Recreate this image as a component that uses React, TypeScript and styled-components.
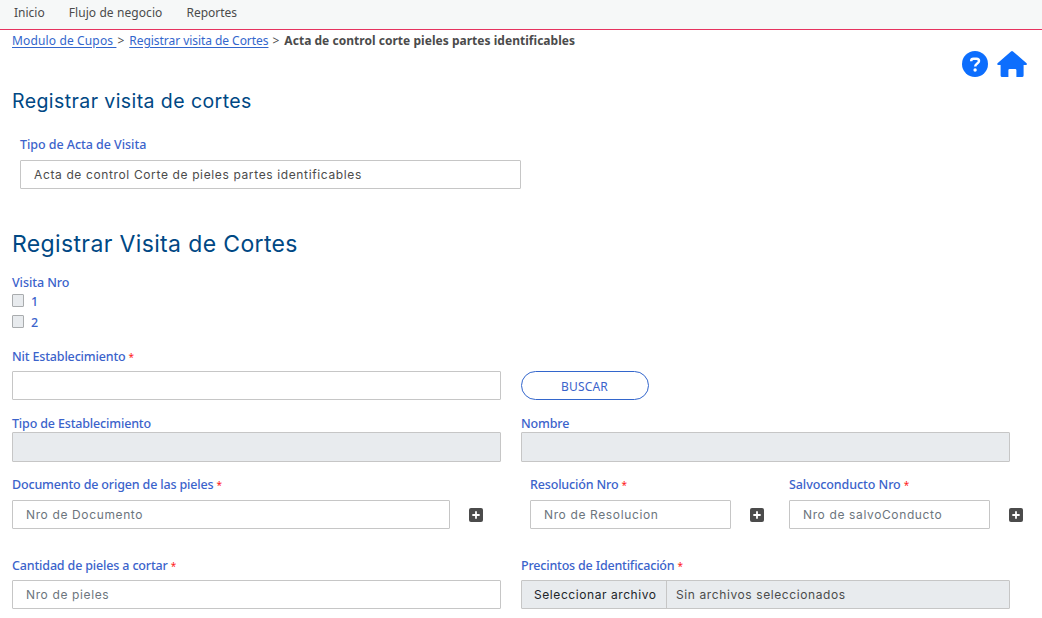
import React from "react";
import styled, { createGlobalStyle } from "styled-components";

const GlobalStyle = createGlobalStyle`
  * { box-sizing: border-box; }
  body { margin: 0; background: #fff; color: #4b4b4b; font-family: "Open Sans", sans-serif; font-size: 13px; overflow: hidden; }
`;

const NavBar = styled.nav`
  display: flex;
  gap: 24px;
  height: 30px;
  padding: 0 14px;
  background: #f6f8f8;
  border-bottom: 1px solid #e6335f;
  line-height: 26px;
`;

const NavItem = styled.a<{ $spacing: number }>`
  font-family: "Noto Sans", sans-serif;
  font-size: 12px;
  letter-spacing: ${(p) => p.$spacing}px;
  color: #4b4b4b;
  white-space: nowrap;
`;

const Page = styled.main`
  display: flex;
  flex-direction: column;
  padding: 0 12px;
`;

const Breadcrumb = styled.div`
  display: flex;
  height: 21px;
  line-height: 21px;
  font-family: "Noto Sans", sans-serif;
  font-size: 12px;
  white-space: pre;
`;

const Crumb = styled.a<{ $spacing: number }>`
  color: #3366cc;
  text-decoration: underline;
  text-underline-offset: 2px;
  letter-spacing: ${(p) => p.$spacing}px;
`;

const Separator = styled.span<{ $left: number }>`
  margin: 0 5px 0 ${(p) => p.$left}px;
`;

const Current = styled.strong`
  letter-spacing: 0.03px;
`;

const Actions = styled.div`
  display: flex;
  justify-content: flex-end;
  gap: 9px;
  height: 28px;
  padding-right: 3px;
`;

const Title = styled.h1<{ $size: number; $top: number; $height: number; $spacing: number }>`
  margin: ${(p) => p.$top}px 0 0;
  height: ${(p) => p.$height}px;
  line-height: ${(p) => p.$height}px;
  font-family: Inter, sans-serif;
  font-size: ${(p) => p.$size}px;
  font-weight: 400;
  letter-spacing: ${(p) => p.$spacing}px;
  color: #004884;
`;

const Label = styled.label<{ $spacing?: number; $raised?: boolean }>`
  height: 18px;
  padding-top: ${(p) => (p.$raised ? 0 : 1)}px;
  line-height: 18px;
  font-family: "Noto Sans", sans-serif;
  font-size: 12.5px;
  font-weight: 500;
  letter-spacing: ${(p) => p.$spacing ?? -0.16}px;
  color: #3b63cb;
  white-space: nowrap;
`;

const Asterisk = styled.span`
  margin-left: 3px;
  font-size: 10px;
  font-weight: 400;
  color: #ff2020;
`;

const Row = styled.div<{ $top: number }>`
  display: flex;
  margin-top: ${(p) => p.$top}px;
`;

const Field = styled.div<{ $width: number; $left?: number; $gap?: number }>`
  display: flex;
  flex-direction: column;
  width: ${(p) => p.$width}px;
  margin-left: ${(p) => p.$left ?? 0}px;
  gap: ${(p) => p.$gap ?? 0}px;
`;

const Input = styled.input<{ $height?: number }>`
  width: 100%;
  height: ${(p) => p.$height ?? 29}px;
  padding: 0 13px 1px;
  border: 1px solid #c6c6c6;
  border-radius: 1px;
  background: #fff;
  color: #4b4b4b;
  font-family: Inter, sans-serif;
  font-size: 12px;
  letter-spacing: 0.63px;
  &::placeholder { color: #6c757d; opacity: 1; }
  &:disabled { background: #e8ebee; }
`;

const CheckRow = styled.label<{ $height: number }>`
  display: flex;
  gap: 7px;
  height: ${(p) => p.$height}px;
  font-family: "Noto Sans", sans-serif;
  font-size: 12.5px;
  font-weight: 500;
  line-height: 22px;
  color: #3b63cb;
`;

const CheckBox = styled.input`
  appearance: none;
  width: 12px;
  height: 13px;
  margin: 3px 0 0;
  border: 1px solid #a9acae;
  border-radius: 1px;
  background: #e8ebee;
`;

const SearchButton = styled.button`
  width: 128px;
  height: 29px;
  margin: 24px 0 0 20px;
  padding: 2px 1px 0 0;
  border: 1px solid #3366cc;
  border-radius: 15px;
  background: #fff;
  color: #3b63cb;
  font-family: "Noto Sans", sans-serif;
  font-size: 12px;
  letter-spacing: 0.15px;
`;

const AddButton = styled.button<{ $left: number }>`
  display: flex;
  width: 14px;
  height: 14px;
  margin: 33px 0 0 ${(p) => p.$left}px;
  padding: 0;
  border: 0;
  background: none;
`;

const FilePicker = styled.div`
  display: flex;
  height: 29px;
  border: 1px solid #c6c6c6;
  border-radius: 1px;
  background: #e8ebee;
  font-family: Inter, sans-serif;
  font-size: 12px;
  line-height: 28px;
`;

const FileButton = styled.span`
  width: 145px;
  padding-left: 12px;
  border-right: 1px solid #c6c6c6;
  color: #212529;
  letter-spacing: 0.57px;
`;

const FileStatus = styled.span`
  padding-left: 9px;
  letter-spacing: 0.6px;
`;

const HelpIcon = () => (
  <svg width="26" height="26" viewBox="0 0 26 26">
    <circle cx="13" cy="13" r="13" fill="#0d6efd" />
    <path d="M9.2 10.3V9.9C9.2 8.6 10.2 7.8 11.5 7.8H14.6C16 7.8 17 8.8 17 10.1C17 12.6 13.2 12.6 13.2 15.6" fill="none" stroke="#fff" strokeWidth="2.5" />
    <circle cx="13.1" cy="19" r="1.7" fill="#fff" />
  </svg>
);

const HomeIcon = () => (
  <svg width="30" height="26" viewBox="0 0 30 26">
    <path d="M14 .5Q15 -.4 16 .5L29.3 12Q30.5 13.2 29.3 14H26.6V24.4Q26.6 26 25 26H19.4V19.2Q19.4 18 18.2 18H12.6Q11.4 18 11.4 19.2V26H5.2Q3.6 26 3.6 24.4V14H.9Q-.4 13.2 .8 12Z" fill="#0d6efd" />
  </svg>
);

const PlusIcon = () => (
  <svg width="14" height="14" viewBox="0 0 14 14">
    <rect width="14" height="14" rx="2" fill="#4b4b4b" />
    <path d="M7 4V10M4 7H10" stroke="#fff" strokeWidth="1.8" strokeLinecap="round" />
  </svg>
);

export default function App() {
  return (
    <>
      <GlobalStyle />
      <NavBar>
        <NavItem $spacing={0}>Inicio</NavItem>
        <NavItem $spacing={0.08}>Flujo de negocio</NavItem>
        <NavItem $spacing={0}>Reportes</NavItem>
      </NavBar>
      <Page>
        <Breadcrumb>
          <Crumb $spacing={0.14}>{"Modulo de Cupos "}</Crumb>
          <Separator $left={1}>&gt;</Separator>
          <Crumb $spacing={-0.05}>Registrar visita de Cortes</Crumb>
          <Separator $left={4}>&gt;</Separator>
          <Current>Acta de control corte pieles partes identificables</Current>
        </Breadcrumb>
        <Actions>
          <HelpIcon />
          <HomeIcon />
        </Actions>
        <Title $size={19.5} $top={10} $height={24} $spacing={0.42}>Registrar visita de cortes</Title>
        <Row $top={23}>
          <Field $width={501} $left={8} $gap={6}>
            <Label $spacing={-0.05} $raised>Tipo de Acta de Visita</Label>
            <Input defaultValue="Acta de control Corte de pieles partes identificables" />
          </Field>
        </Row>
        <Title $size={23} $top={41} $height={28} $spacing={0.36}>Registrar Visita de Cortes</Title>
        <Row $top={15}>
          <Field $width={200}>
            <Label $spacing={-0.08}>Visita Nro</Label>
            <CheckRow $height={21}><CheckBox type="checkbox" disabled />1</CheckRow>
            <CheckRow $height={21}><CheckBox type="checkbox" disabled />2</CheckRow>
          </Field>
        </Row>
        <Row $top={14}>
          <Field $width={489} $gap={6}>
            <Label>Nit Establecimiento<Asterisk>*</Asterisk></Label>
            <Input />
          </Field>
          <SearchButton>BUSCAR</SearchButton>
        </Row>
        <Row $top={14}>
          <Field $width={489}>
            <Label>Tipo de Establecimiento</Label>
            <Input $height={30} disabled />
          </Field>
          <Field $width={489} $left={20}>
            <Label>Nombre</Label>
            <Input $height={30} disabled />
          </Field>
        </Row>
        <Row $top={13}>
          <Field $width={438} $gap={7}>
            <Label>Documento de origen de las pieles<Asterisk>*</Asterisk></Label>
            <Input placeholder="Nro de Documento" />
          </Field>
          <AddButton $left={19}><PlusIcon /></AddButton>
          <Field $width={201} $left={47} $gap={7}>
            <Label>Resolución Nro<Asterisk>*</Asterisk></Label>
            <Input placeholder="Nro de Resolucion" />
          </Field>
          <AddButton $left={19}><PlusIcon /></AddButton>
          <Field $width={201} $left={25} $gap={7}>
            <Label $spacing={-0.08}>Salvoconducto Nro<Asterisk>*</Asterisk></Label>
            <Input placeholder="Nro de salvoConducto" />
          </Field>
          <AddButton $left={19}><PlusIcon /></AddButton>
        </Row>
        <Row $top={27}>
          <Field $width={489} $gap={6}>
            <Label>Cantidad de pieles a cortar<Asterisk>*</Asterisk></Label>
            <Input placeholder="Nro de pieles" />
          </Field>
          <Field $width={489} $left={20} $gap={6}>
            <Label $spacing={-0.19}>Precintos de Identificación<Asterisk>*</Asterisk></Label>
            <FilePicker>
              <FileButton>Seleccionar archivo</FileButton>
              <FileStatus>Sin archivos seleccionados</FileStatus>
            </FilePicker>
          </Field>
        </Row>
      </Page>
    </>
  );
}
